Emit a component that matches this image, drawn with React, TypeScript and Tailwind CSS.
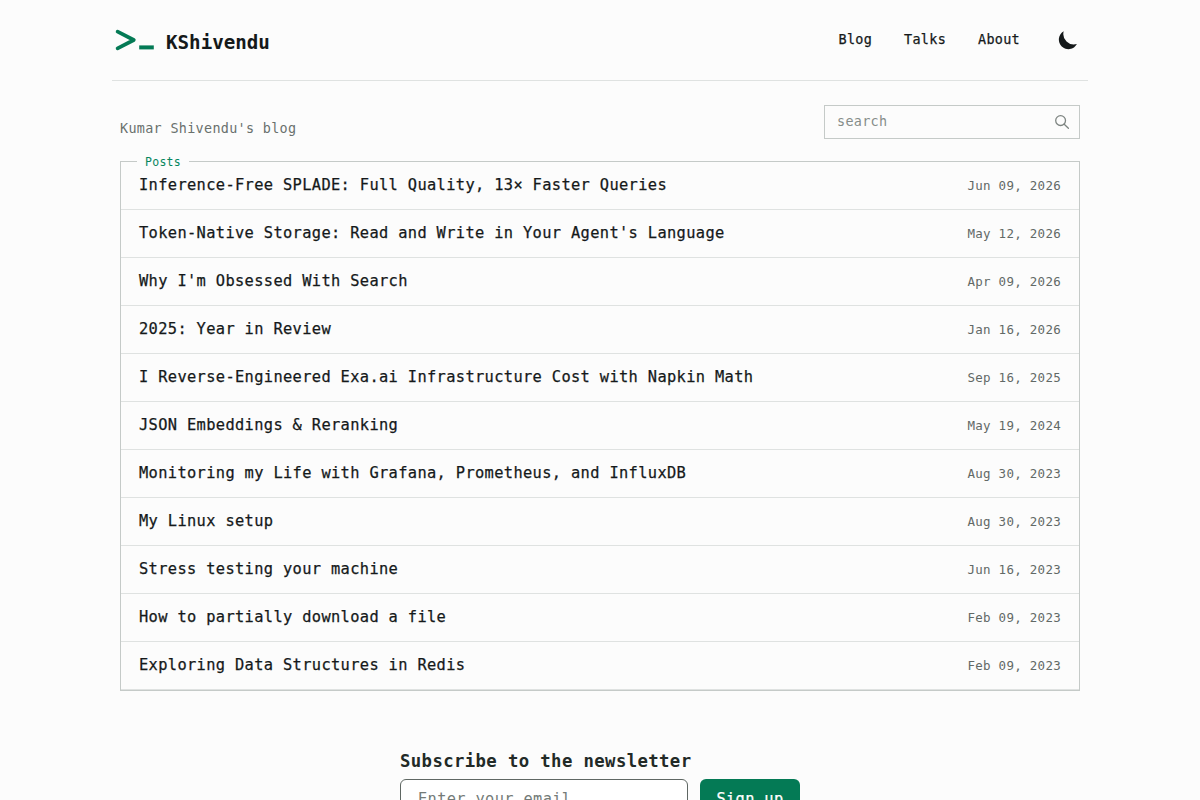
import { useState } from "react"

interface Post {
  title: string
  date: string
}

const links = ["Blog", "Talks", "About"]

const posts: Post[] = [
  { title: "Inference-Free SPLADE: Full Quality, 13× Faster Queries", date: "Jun 09, 2026" },
  { title: "Token-Native Storage: Read and Write in Your Agent's Language", date: "May 12, 2026" },
  { title: "Why I'm Obsessed With Search", date: "Apr 09, 2026" },
  { title: "2025: Year in Review", date: "Jan 16, 2026" },
  { title: "I Reverse-Engineered Exa.ai Infrastructure Cost with Napkin Math", date: "Sep 16, 2025" },
  { title: "JSON Embeddings & Reranking", date: "May 19, 2024" },
  { title: "Monitoring my Life with Grafana, Prometheus, and InfluxDB", date: "Aug 30, 2023" },
  { title: "My Linux setup", date: "Aug 30, 2023" },
  { title: "Stress testing your machine", date: "Jun 16, 2023" },
  { title: "How to partially download a file", date: "Feb 09, 2023" },
  { title: "Exploring Data Structures in Redis", date: "Feb 09, 2023" },
]

function Header() {
  return (
    <header className="flex h-[81px] justify-between border-b border-[#dfe2e1] pr-[10px] pl-[3px]">
      <a href="#" className="flex items-start">
        <svg width="40" height="24" viewBox="0 0 40 24" fill="none" stroke="#047a55" className="mt-7">
          <path d="M2.6 3.7 18.8 12 2.6 20.3" strokeWidth="3.7" strokeLinecap="round" strokeLinejoin="round" />
          <path d="M24.2 19.4H38.8" strokeWidth="4" />
        </svg>
        <span className="mt-[29px] ml-[11px] text-[19.2px] leading-7 font-bold tracking-[-0.01px] text-[#15191a]">KShivendu</span>
      </a>
      <nav className="flex items-start gap-8 text-[13.45px] leading-5 tracking-[0.3px] text-[#15191a]">
        {links.map((link) => (
          <a key={link} href="#" className="mt-[30px] [-webkit-text-stroke:0.25px]">
            {link}
          </a>
        ))}
        <button aria-label="Toggle theme" className="mt-[30px] ml-[6px]">
          <svg width="20" height="20" viewBox="0 0 20 20" fill="#15191a">
            <path d="M5.7 1.2A9.6 9.6 0 1 0 18.9 14.1A10.6 10.6 0 0 1 5.7 1.2Z" />
          </svg>
        </button>
      </nav>
    </header>
  )
}

function PostList({ items }: { items: Post[] }) {
  return (
    <section className="relative h-[530px] border border-[#c5cac8]">
      <h2 className="absolute -top-2 left-4 bg-[#fcfcfc] px-2 text-[11.5px] leading-4 tracking-[0.28px] text-[#07865e]">Posts</h2>
      <ul>
        {items.map((post) => (
          <li key={post.title} className="flex h-12 items-start justify-between border-b border-[#dfe2e1] px-[18px]">
            <a href="#" className="mt-[11px] text-[15.36px] leading-6 tracking-[0.353px] text-[#15191a] [-webkit-text-stroke:0.25px]">
              {post.title}
            </a>
            <time className="mt-[14px] text-[12.48px] leading-5 tracking-[0.29px] text-[#626966]">{post.date}</time>
          </li>
        ))}
      </ul>
    </section>
  )
}

function Newsletter() {
  const [email, setEmail] = useState("")

  return (
    <section className="mx-auto mt-14 w-[400px]">
      <h3 className="text-[17.3px] leading-7 font-bold tracking-[0.39px] text-[#222a27]">Subscribe to the newsletter</h3>
      <form className="mt-1 flex gap-3" onSubmit={(e) => e.preventDefault()}>
        <input
          type="email"
          value={email}
          onChange={(e) => setEmail(e.target.value)}
          placeholder="Enter your email"
          className="h-10 w-[288px] rounded-md border border-[#5f6763] bg-white px-[17px] text-[15.36px] tracking-[0.34px] placeholder:text-[#747b78]"
        />
        <button className="h-10 w-[100px] rounded-md bg-[#047a55] pt-0.5 text-[15.36px] tracking-[0.34px] text-white [-webkit-text-stroke:0.25px]">
          Sign up
        </button>
      </form>
    </section>
  )
}

export default function App() {
  const [query, setQuery] = useState("")
  const filtered = posts.filter((post) => post.title.toLowerCase().includes(query.toLowerCase()))

  return (
    <div className="h-screen overflow-hidden bg-[#fcfcfc] font-['DejaVu_Sans_Mono',monospace]">
      <div className="mx-auto w-[976px]">
        <Header />
        <main className="px-2">
          <div className="flex h-20 items-start justify-between">
            <p className="mt-[38px] text-[13.45px] leading-5 tracking-[0.31px] text-[#69706d]">Kumar Shivendu's blog</p>
            <label className="mt-6 flex h-[34px] w-64 items-center justify-between border border-[#c5cac8] pr-[9px] pl-3">
              <input
                value={query}
                onChange={(e) => setQuery(e.target.value)}
                placeholder="search"
                className="w-44 text-[13.45px] tracking-[0.31px] outline-none placeholder:text-[#868d8a]"
              />
              <svg width="16" height="16" viewBox="0 0 16 16" fill="none" stroke="#7d8481" strokeWidth="1.3" strokeLinecap="round" className="mb-px">
                <circle cx="6.6" cy="6.6" r="4.9" />
                <path d="m10.2 10.2 4.2 4.1" />
              </svg>
            </label>
          </div>
          <PostList items={filtered} />
          <Newsletter />
        </main>
      </div>
    </div>
  )
}
